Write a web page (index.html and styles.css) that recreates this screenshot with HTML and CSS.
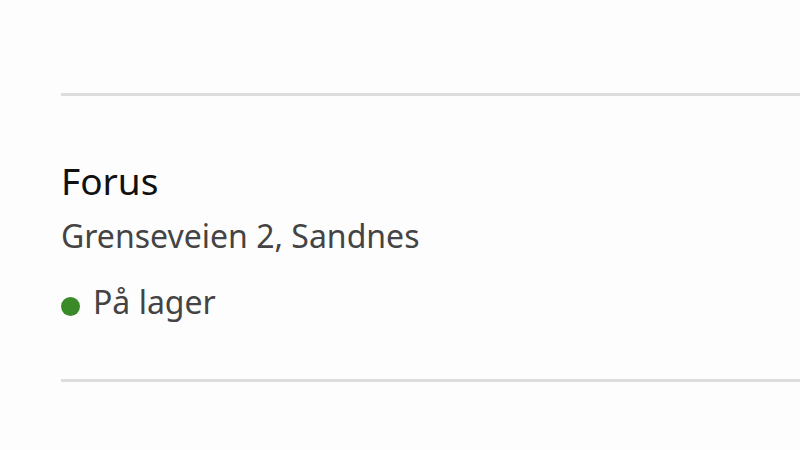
FILE: index.html
```html
<!DOCTYPE html>
<html lang="no">
<head>
  <meta charset="UTF-8">
  <meta name="viewport" content="width=device-width, initial-scale=1.0">
  <title>Butikk</title>
  <link rel="stylesheet" href="styles.css">
</head>
<body>

  <div id="store-list">
    <div class="store">
      <h2 class="store-name">Forus</h2>
      <p class="store-address">Grenseveien 2, Sandnes</p>
      <p class="store-stock"><span class="stock-dot"></span>På lager</p>
    </div>
  </div>

</body>
</html>
```

FILE: styles.css
```css
body {
  margin: 0;
  background-color: #fdfdfd;
  font-family: "Noto Sans", sans-serif;
}

#store-list {
  padding: 93px 0 0 61px;
}

.store {
  border-top: 3px solid #dddddd;
  border-bottom: 3px solid #dddddd;
  padding: 60px 0 55px;
}

.store-name {
  margin: 0;
  font-size: 37px;
  font-weight: 400;
  line-height: 50px;
  color: #111111;
}

.store-address {
  margin: 8px 0 0;
  font-size: 32px;
  line-height: 44px;
  color: #444444;
}

.store-stock {
  display: flex;
  align-items: flex-start;
  margin: 22px 0 0;
  font-size: 32px;
  line-height: 44px;
  color: #444444;
}

.stock-dot {
  width: 19px;
  height: 19px;
  margin: 17px 13px 0 0;
  border-radius: 50%;
  background-color: #3a8a2a;
}
```
